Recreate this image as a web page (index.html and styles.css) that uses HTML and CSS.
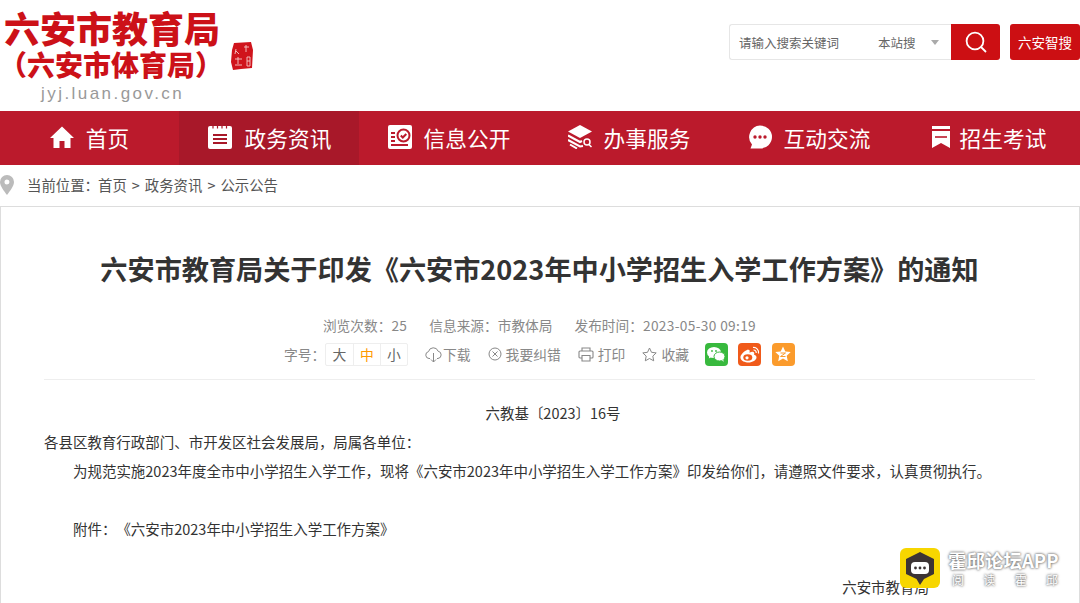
FILE: index.html
```html
<!DOCTYPE html>
<html lang="zh-CN">
  <head>
    <meta charset="UTF-8" />
    <title>六安市教育局</title>
    <link rel="stylesheet" href="styles.css">
  </head>
  <body>
    <header class="top">
      <div class="logo">
        <div class="logo-name">六安市教育局</div>
        <div class="logo-sub">（六安市体育局）</div>
        <div class="logo-url">jyj.luan.gov.cn</div>
      </div>
      <svg class="seal" viewBox="0 0 22 28">
        <path fill="#d0141c" d="M3 1 L20 0 L22 8 L21 26 L10 27 L2 28 L0 20 L1 8 Z" />
        <path stroke="#f6c9c9" stroke-width=".9" fill="none" d="M15 3v7M13 5h5M5 7l-1 5M5 9l3 3M4 17h7M7 15v7M4 23h7M16 15h3v9h-3zM16 19h3" />
      </svg>
      <div class="search">
        <div class="search-box">
          <span class="search-hint">请输入搜索关键词</span>
          <span class="search-scope">本站搜</span>
          <span class="search-arrow"></span>
        </div>
        <div class="search-btn">
          <svg width="24" height="24" viewBox="0 0 24 24" fill="none" stroke="#fff" stroke-width="1.8">
            <circle cx="11" cy="11" r="8.4" />
            <path d="M17 17l5 5" />
          </svg>
        </div>
        <div class="smart-btn">六安智搜</div>
      </div>
    </header>

    <nav class="nav">
      <a class="nav-item">
        <svg width="24" height="24" viewBox="0 0 24 24">
          <path fill="#fff" d="M12 1.500 L24 13 H20.500 V23 H14.500 V16 H9.500 V23 H3.500 V13 H0 Z" />
        </svg>
        首页
      </a>
      <a class="nav-item active">
        <svg width="26" height="24" viewBox="0 0 26 24">
          <rect x="1" y="1" width="24" height="23" rx="2" fill="#fff" />
          <path stroke="#a81829" stroke-width="1.200" d="M6 0v3.500M10.500 0v3.500M15 0v3.500M19.500 0v3.500" />
          <path stroke="#a81829" stroke-width="2" d="M6 10h14M6 14h14M6 18h14" />
        </svg>
        政务资讯
      </a>
      <a class="nav-item">
        <svg width="24" height="24" viewBox="0 0 24 24">
          <rect width="24" height="24" rx="2" fill="#fff" />
          <path stroke="#bb1a2c" stroke-width="2" fill="none" d="M3 8h4M3 12h4M3 16h4M3 20h17" />
          <circle cx="15.500" cy="10.500" r="6" fill="none" stroke="#bb1a2c" stroke-width="2" />
          <path stroke="#bb1a2c" stroke-width="2" fill="none" d="M12.800 10.500l2 2 3.500-3.500" />
        </svg>
        信息公开
      </a>
      <a class="nav-item">
        <svg width="24" height="24" viewBox="0 0 24 24">
          <path fill="#fff" d="M12 0 L24 6.500 L12 13 L0 6.500 Z" />
          <path stroke="#fff" stroke-width="2" fill="none" d="M0 10.500 L12 17 L14 16M0 15 L12 21.500 L15 21M2 19.500 L9 23.500" />
          <circle cx="19" cy="17" r="3" fill="none" stroke="#fff" stroke-width="1.500" />
          <path stroke="#fff" stroke-width="1.500" d="M21 19.500l2.500 2.500" />
        </svg>
        办事服务
      </a>
      <a class="nav-item">
        <svg width="24" height="24" viewBox="0 0 24 24">
          <path fill="#fff" d="M12 0.500a12 11.500 0 0 1 0 23H2.500L4 19.500A11.500 11.500 0 0 1 12 0.500z" />
          <circle cx="7" cy="12" r="1.700" fill="#bb1a2c" />
          <circle cx="12" cy="12" r="1.700" fill="#bb1a2c" />
          <circle cx="17" cy="12" r="1.700" fill="#bb1a2c" />
        </svg>
        互动交流
      </a>
      <a class="nav-item last">
        <svg width="18" height="22" viewBox="0 0 18 22">
          <path fill="#fff" d="M0 0h18v3H0zM0 5h18v17l-9-5-9 5z" />
          <path stroke="#bb1a2c" stroke-width="1.600" d="M3 11h12" />
        </svg>
        招生考试
      </a>
    </nav>

    <div class="crumb">
      <svg width="14" height="20" viewBox="0 0 14 20">
        <path fill="#bbb" fill-rule="evenodd" d="M7 0a7 7 0 0 1 7 7c0 4-4 9-7 13C4 16 0 11 0 7a7 7 0 0 1 7-7zm0 4.500a2.500 2.500 0 1 0 0 5 2.500 2.500 0 0 0 0-5z" />
      </svg>
      <span class="crumb-label">当前位置：</span>
      <span>首页</span><span class="crumb-sep">&gt;</span>
      <span>政务资讯</span><span class="crumb-sep">&gt;</span>
      <span>公示公告</span>
    </div>

    <main class="article">
      <h1 class="title">六安市教育局关于印发《六安市2023年中小学招生入学工作方案》的通知</h1>
      <div class="meta">
        <span>浏览次数：<span class="meta-num">25</span></span>
        <span>信息来源：市教体局</span>
        <span>发布时间：<span class="meta-num">2023-05-30 09:19</span></span>
      </div>
      <div class="tools">
        <span class="size-label">字号：</span>
        <div class="sizes">
          <span>大</span>
          <span class="on">中</span>
          <span>小</span>
        </div>
        <span class="tool first">
          <svg width="17" height="17" viewBox="0 0 17 17" fill="none" stroke="#888" stroke-width="1">
            <path d="M5 12.500H4a3.500 3.500 0 0 1-.5-6.900 5 5 0 0 1 9.600-.4 3.700 3.700 0 0 1-.1 7.300h-1" />
            <path d="M8.500 7v9M6 13.500l2.500 2.500 2.500-2.500" />
          </svg>
          下载
        </span>
        <span class="tool">
          <svg width="14" height="14" viewBox="0 0 14 14" fill="none" stroke="#888" stroke-width="1">
            <circle cx="7" cy="7" r="6" />
            <path d="M4.500 4.500l5 5M9.500 4.500l-5 5" />
          </svg>
          我要纠错
        </span>
        <span class="tool">
          <svg width="16" height="15" viewBox="0 0 16 15" fill="none" stroke="#888" stroke-width="1.100">
            <path d="M4 4V1h8v3M4 11H2a1 1 0 0 1-1-1V5a1 1 0 0 1 1-1h12a1 1 0 0 1 1 1v5a1 1 0 0 1-1 1h-2" />
            <path d="M4 8.500h8V14H4z" />
          </svg>
          打印
        </span>
        <span class="tool">
          <svg width="15" height="15" viewBox="0 0 15 15" fill="none" stroke="#888" stroke-width="1">
            <path d="M7.500 1l2 4.300 4.700.6-3.400 3.200.9 4.700-4.200-2.300-4.200 2.300.9-4.700L.8 5.900l4.700-.6z" />
          </svg>
          收藏
        </span>
        <div class="shares">
          <span class="share wechat">
            <svg width="18" height="15" viewBox="0 0 18 15" fill="#fff">
              <ellipse cx="7" cy="5.500" rx="7" ry="5.500" />
              <path d="M2.500 8.500l-.7 3 3.200-1.700z" />
              <ellipse cx="12.500" cy="9.500" rx="5.500" ry="4.500" stroke="#38b93e" stroke-width="1" />
              <path d="M15 13l1.500 2-.2-3z" />
              <circle cx="5" cy="4" r=".9" fill="#38b93e" />
              <circle cx="9" cy="4" r=".9" fill="#38b93e" />
            </svg>
          </span>
          <span class="share weibo">
            <svg width="20" height="17" viewBox="0 0 20 17">
              <path fill="#fff" d="M8 3.500C4 5 0 9 .5 12c.5 3 4.500 4.500 8 4.500 4 0 8-2.500 8-5 0-1.700-1.500-2.300-2.500-2.700.5-1.300.3-2.300-.5-2.800-1-.5-2.700 0-4 .7.300-1.500.300-2.400-.2-2.800-.4-.3-1-.2-1.800-.4z" />
              <ellipse cx="7.800" cy="11.500" rx="4.500" ry="3.300" fill="#f05a1a" />
              <circle cx="7" cy="11.800" r="1.600" fill="#fff" />
              <path fill="none" stroke="#fff" stroke-width="1.200" d="M13 1.500a5 5 0 0 1 5.500 6M13.500 4a2.500 2.500 0 0 1 2.700 3" />
            </svg>
          </span>
          <span class="share qzone">
            <svg width="16" height="16" viewBox="0 0 16 16">
              <path fill="#fff" d="M8 .5l2.300 5 5.400.6-4 3.700 1.100 5.400L8 12.500l-4.800 2.700 1.100-5.400-4-3.700 5.400-.6z" />
              <path fill="none" stroke="#fb9b2c" stroke-width="1" d="M5.500 7h5l-5 3.500h5" />
            </svg>
          </span>
        </div>
      </div>

      <div class="body">
        <p class="center">六教基〔2023〕16号</p>
        <p>各县区教育行政部门、市开发区社会发展局，局属各单位：</p>
        <p class="indent">为规范实施2023年度全市中小学招生入学工作，现将《六安市2023年中小学招生入学工作方案》印发给你们，请遵照文件要求，认真贯彻执行。</p>
        <p class="blank"></p>
        <p class="indent">附件：《六安市2023年中小学招生入学工作方案》</p>
        <p class="blank"></p>
        <p class="sign">六安市教育局</p>
      </div>
    </main>

    <div class="mark">
      <div class="mark-logo">
        <svg width="30" height="33" viewBox="0 0 30 33">
          <path fill="#3c3434" d="M15 0 L29 7 V22 L19 27 L15 33 L11.500 27 L1 22 V7 Z" />
          <rect x="6" y="10" width="18" height="12" rx="4" fill="#fff" />
          <circle cx="10.500" cy="16" r="1.400" fill="#3c3434" />
          <circle cx="15" cy="16" r="1.400" fill="#3c3434" />
          <circle cx="19.500" cy="16" r="1.400" fill="#3c3434" />
        </svg>
      </div>
      <div class="mark-text">
        <div class="mark-name">霍邱论坛APP</div>
        <div class="mark-sub"><span>阅</span><span>读</span><span>霍</span><span>邱</span></div>
      </div>
    </div>
  </body>
</html>
```
FILE: styles.css
```css
* {
  margin: 0;
  padding: 0;
  box-sizing: border-box;
  font-family: "Noto Sans CJK SC", "Noto Sans", sans-serif;
  text-spacing-trim: space-all;
}

html,
body {
  height: 100vh;
  overflow: hidden;
}

body {
  position: relative;
  background: #fff;
  color: #333;
  font-size: 14px;
}

/* header */
.top {
  display: flex;
  height: 111px;
  padding: 7px 0 0 4px;
}

.logo {
  width: 227px;
  color: #cc1118;
  font-weight: 900;
}

.logo-name {
  font-size: 36px;
  line-height: 40px;
}

.logo-sub {
  margin-left: -5px;
  white-space: nowrap;
  font-size: 28px;
  line-height: 34px;
}

.logo-url {
  margin: 2px 0 0 37px;
  color: #999;
  font-family: "Liberation Sans", sans-serif;
  font-size: 17px;
  font-weight: 400;
  line-height: 22px;
  letter-spacing: 2.450px;
}

.seal {
  width: 22px;
  height: 28px;
  margin-top: 35px;
}

.search {
  display: flex;
  height: 36px;
  margin: 17px 0 0 476px;
}

.search-box {
  display: flex;
  align-items: center;
  width: 222px;
  padding-left: 9px;
  border: 1px solid #e6e6e6;
  border-right: none;
  border-radius: 3px 0 0 3px;
  color: #666;
  font-size: 12.500px;
}

.search-hint {
  width: 139px;
}

.search-arrow {
  width: 0;
  height: 0;
  margin-left: 15px;
  border: 4px solid transparent;
  border-top: 5px solid #aaa;
  border-bottom: none;
}

.search-btn {
  display: flex;
  align-items: center;
  justify-content: center;
  width: 49px;
  background: #cc0f13;
  border-radius: 0 3px 3px 0;
}

.smart-btn {
  width: 70px;
  margin-left: 10px;
  background: #cc0f13;
  border-radius: 3px;
  color: #fff;
  font-size: 13.500px;
  line-height: 36px;
  text-align: center;
}

/* nav */
.nav {
  display: grid;
  grid-template-columns: 179px repeat(5, 180px);
  height: 54px;
  background: #bb1a2c;
}

.nav-item {
  display: flex;
  align-items: center;
  justify-content: center;
  gap: 12px;
  padding-bottom: 2px;
  color: #fff;
  font-size: 21.700px;
}

.nav-item.active {
  background: #a81829;
}

.nav-item.last {
  gap: 10px;
}

/* breadcrumb */
.crumb {
  display: flex;
  align-items: center;
  height: 41px;
  padding-bottom: 2px;
  color: #555;
  font-size: 14.400px;
  white-space: nowrap;
}

.crumb svg {
  margin-right: 13px;
}

.crumb-label {
  width: 71px;
}

.crumb-sep {
  margin: 0 5px;
}

/* article */
.article {
  min-height: 420px;
  padding: 0 44px 0 43px;
  border: 1px solid #ddd;
}

.title {
  margin-top: 42px;
  color: #333;
  font-size: 27.150px;
  font-weight: 700;
  line-height: 40px;
  text-align: center;
}

.meta {
  display: flex;
  justify-content: center;
  gap: 22px;
  margin-top: 26px;
  color: #888;
  font-family: "Open Sans", "Noto Sans CJK SC", sans-serif;
  font-size: 13.700px;
  line-height: 20px;
}

.meta-num {
  letter-spacing: .35px;
}

.tools {
  display: flex;
  align-items: center;
  height: 24px;
  margin-top: 7px;
  padding-left: 240px;
  color: #888;
  font-size: 13.800px;
  white-space: nowrap;
}

.size-label {
  width: 41px;
}

.sizes {
  display: flex;
  height: 23px;
  border: 1px solid #eee;
  border-radius: 2px;
  color: #666;
  line-height: 21px;
}

.sizes span {
  width: 27px;
  border-left: 1px solid #eee;
  text-align: center;
}

.sizes span:first-child {
  border-left: none;
}

.sizes .on {
  color: #f90;
}

.tool {
  display: flex;
  align-items: center;
  gap: 4px;
  margin-left: 17px;
}

.tool.first {
  gap: 1px;
}

.shares {
  display: flex;
  gap: 10.500px;
  margin-left: 16px;
}

.share {
  display: flex;
  align-items: center;
  justify-content: center;
  width: 23px;
  height: 23px;
  border-radius: 4px;
}

.wechat {
  background: #38b93e;
}

.weibo {
  background: #f05a1a;
}

.qzone {
  background: #fb9b2c;
}

.body {
  margin-top: 13px;
  padding-top: 18px;
  border-top: 1px solid #eee;
  color: #333;
  font-size: 14.480px;
  line-height: 29px;
}

.body .center {
  padding-left: 27px;
  text-align: center;
}

.body .indent {
  text-indent: 29px;
}

.body .blank {
  height: 29px;
}

.body .sign {
  padding-right: 106px;
  text-align: right;
}

/* watermark */
.mark {
  position: absolute;
  top: 548px;
  left: 900px;
  display: flex;
  gap: 8px;
}

.mark-logo {
  display: flex;
  align-items: center;
  justify-content: center;
  width: 40px;
  height: 40px;
  background: #f7d600;
  border-radius: 6px;
}

.mark-text {
  width: 114px;
  color: #fff;
  text-shadow: 0 0 3px #666, 0 0 2px #888;
}

.mark-name {
  font-size: 18.500px;
  font-weight: 700;
  line-height: 24px;
  white-space: nowrap;
}

.mark-sub {
  display: flex;
  justify-content: space-between;
  padding: 0 4px;
  font-size: 12px;
  line-height: 16px;
}
```
